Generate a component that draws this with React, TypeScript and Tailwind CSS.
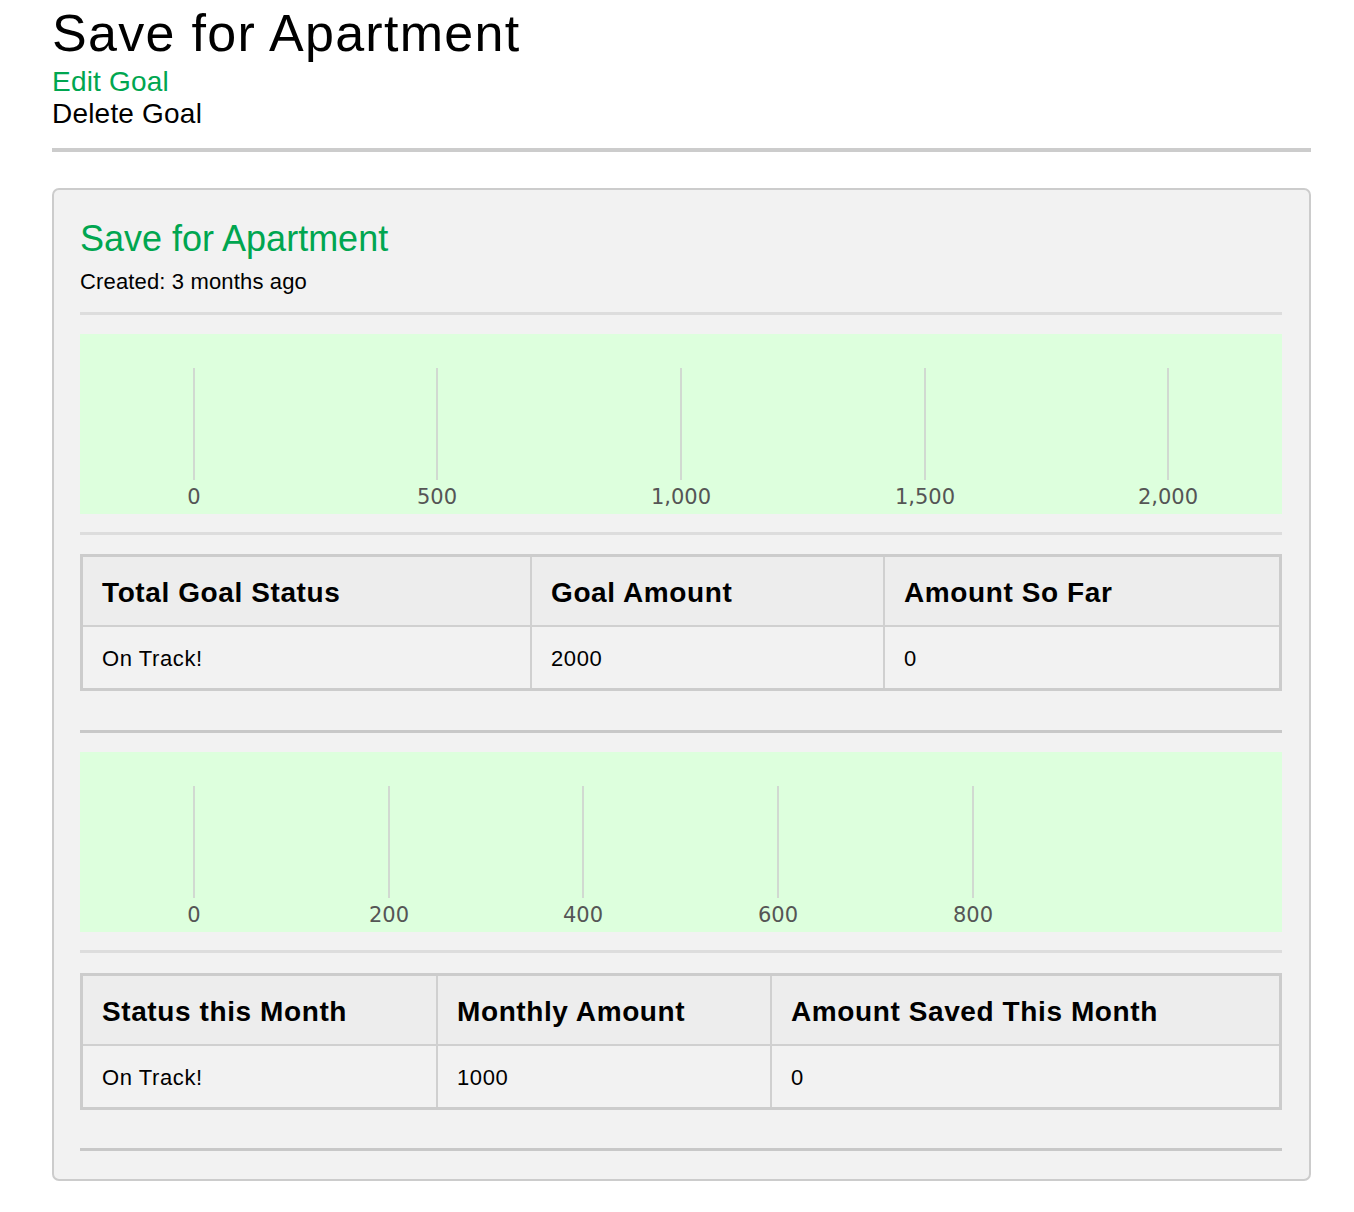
import React from "react";

type Tick = { x: number; label: string };

const totalTicks: Tick[] = [
  { x: 114, label: "0" },
  { x: 357, label: "500" },
  { x: 601, label: "1,000" },
  { x: 845, label: "1,500" },
  { x: 1088, label: "2,000" },
];

const monthTicks: Tick[] = [
  { x: 114, label: "0" },
  { x: 309, label: "200" },
  { x: 503, label: "400" },
  { x: 698, label: "600" },
  { x: 893, label: "800" },
];

function Chart({ ticks }: { ticks: Tick[] }) {
  return (
    <div className="h-[180px] w-full bg-[#ddffdd]">
      <svg width="1202" height="180" viewBox="0 0 1202 180" className="block">
        {ticks.map((t) => (
          <g key={t.label}>
            <line x1={t.x} y1={34} x2={t.x} y2={146} stroke="#cccccc" strokeWidth={1.5} />
            <text
              x={t.x}
              y={170}
              textAnchor="middle"
              fontFamily="'DejaVu Sans', sans-serif"
              fontSize={21}
              fill="#555555"
            >
              {t.label}
            </text>
          </g>
        ))}
      </svg>
    </div>
  );
}

function GoalTable({ cols, heads, values }: { cols: string; heads: string[]; values: string[] }) {
  return (
    <div className="border-[3px] border-[#cccccc]">
      <div className={`grid ${cols} bg-[#ededed] border-b-2 border-[#d0d0d0]`}>
        {heads.map((h, i) => (
          <div
            key={h}
            className={`h-[68px] flex items-center pl-[19px] pt-[3px] text-[28px] font-bold tracking-[0.6px] text-black ${i > 0 ? "border-l-2 border-[#d0d0d0]" : ""}`}
          >
            {h}
          </div>
        ))}
      </div>
      <div className={`grid ${cols} bg-[#f2f2f2]`}>
        {values.map((v, i) => (
          <div
            key={i}
            className={`h-[61px] flex items-center pl-[19px] pt-[1px] text-[22px] tracking-[0.6px] text-black ${i > 0 ? "border-l-2 border-[#d0d0d0]" : ""}`}
          >
            {v}
          </div>
        ))}
      </div>
    </div>
  );
}

export default function App() {
  return (
    <div className="min-h-screen bg-white" style={{ fontFamily: "'Liberation Sans', Arial, sans-serif" }}>
      <div className="ml-[52px] w-[1259px] pb-[31px]">
        <h1 className="pt-[3px] text-[52px] leading-[60px] tracking-[1.3px] text-black">Save for Apartment</h1>
        <div className="mt-[3px] flex flex-col items-start">
          <a href="#" className="text-[28px] leading-[32px] tracking-[0.2px] text-[#00a650]">Edit Goal</a>
          <a href="#" className="text-[28px] leading-[32px] tracking-[0.2px] text-black">Delete Goal</a>
        </div>
        <div className="mt-[18px] h-1 bg-[#cccccc]" />

        <div className="mt-[36px] rounded-[7px] border-2 border-[#cccccc] bg-[#f2f2f2] pl-[26px] pr-[27px] pt-[29px] pb-[28px]">
          <h2 className="text-[36px] leading-[40px] text-[#00a650]">Save for Apartment</h2>
          <p className="mt-[11px] text-[22px] leading-[24px] tracking-[0.15px] text-black">Created: 3 months ago</p>
          <div className="mt-[18px] h-[3px] bg-[#dddddd]" />

          <div className="mt-[19px]">
            <Chart ticks={totalTicks} />
          </div>
          <div className="mt-[18px] h-[3px] bg-[#dddddd]" />
          <div className="mt-[19px]">
            <GoalTable
              cols="grid-cols-[447px_353px_1fr]"
              heads={["Total Goal Status", "Goal Amount", "Amount So Far"]}
              values={["On Track!", "2000", "0"]}
            />
          </div>
          <div className="mt-[39px] h-[3px] bg-[#c8c8c8]" />

          <div className="mt-[19px]">
            <Chart ticks={monthTicks} />
          </div>
          <div className="mt-[18px] h-[3px] bg-[#dddddd]" />
          <div className="mt-[20px]">
            <GoalTable
              cols="grid-cols-[353px_334px_1fr]"
              heads={["Status this Month", "Monthly Amount", "Amount Saved This Month"]}
              values={["On Track!", "1000", "0"]}
            />
          </div>
          <div className="mt-[38px] h-[3px] bg-[#c8c8c8]" />
        </div>
      </div>
    </div>
  );
}
